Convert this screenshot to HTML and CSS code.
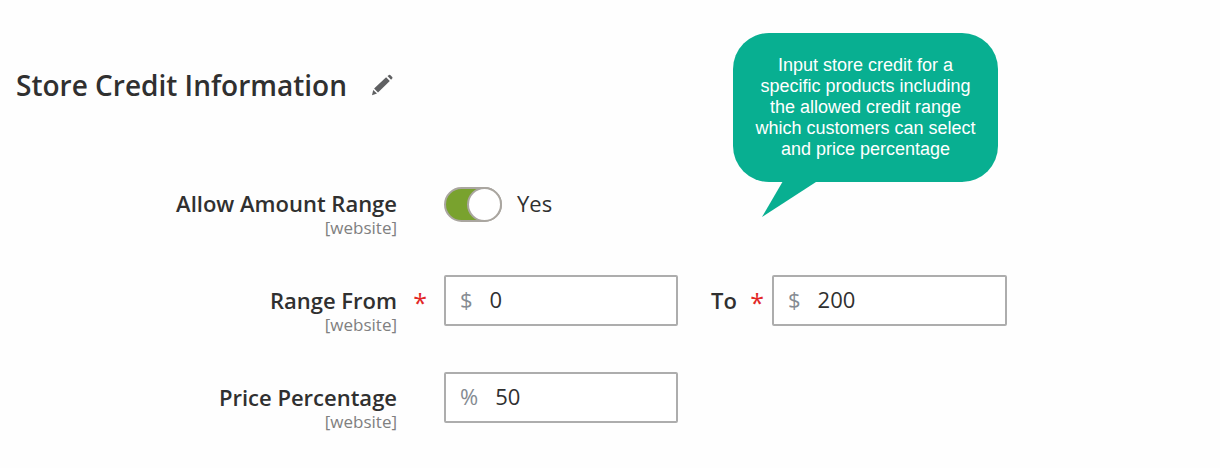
FILE: index.html
```html
<!DOCTYPE html>
<html lang="en">
<head>
<meta charset="utf-8">
<title>Store Credit Information</title>
<link rel="stylesheet" href="styles.css">
</head>
<body>
<main class="page">
  <header class="section-head">
    <h1 class="section-title">Store Credit Information</h1>
    <button class="edit" type="button" aria-label="Edit section">
      <svg class="edit-icon" viewBox="0 0 22 22" aria-hidden="true">
        <path d="M16.500 2.100 18 .9q.7-.4 1.200.1l2 2q.5.500.2 1.200l-1.300 1.500zM15.100 3.200l3.700 3.800L7 18.400l-3.900-3.800zM2.200 15.900l3.800 3.700-5 1.700z"/>
      </svg>
    </button>
  </header>

  <form class="fields">
    <div class="row">
      <label class="label" for="allow-range">Allow Amount Range<small class="scope">[website]</small></label>
      <div class="switch-cell">
        <input class="switch" id="allow-range" type="checkbox" checked>
        <span class="switch-text">Yes</span>
      </div>
    </div>
    <div class="row">
      <label class="label required" for="range-from">Range From<small class="scope">[website]</small></label>
      <div class="box">
        <span class="unit">$</span>
        <input class="value" id="range-from" type="text" value="0">
      </div>
      <label class="label-to required" for="range-to">To</label>
      <div class="box">
        <span class="unit">$</span>
        <input class="value" id="range-to" type="text" value="200">
      </div>
    </div>
    <div class="row">
      <label class="label" for="percentage">Price Percentage<small class="scope">[website]</small></label>
      <div class="box">
        <span class="unit">%</span>
        <input class="value" id="percentage" type="text" value="50">
      </div>
    </div>
  </form>

  <aside class="callout">
    <p class="callout-text">Input store credit for a<br>specific products including<br>the allowed credit range<br>which customers can select<br>and price percentage</p>
    <svg class="callout-tail" viewBox="0 0 54 36" aria-hidden="true"><path d="M21 0H54V1L0 36z"/></svg>
  </aside>
</main>
</body>
</html>
```
FILE: styles.css
```css
*,
*::before,
*::after {
  box-sizing: border-box;
}

body {
  margin: 0;
  background: #fefefe;
  color: #303030;
  font-family: "Open Sans", "Noto Sans", sans-serif;
}

.page {
  position: relative;
  padding: 64px 16px 40px;
}

.section-head {
  display: flex;
  align-items: center;
  gap: 24px;
  margin-bottom: 72px;
}

.section-title {
  margin: 0;
  font-size: 28px;
  font-weight: 600;
  line-height: 42px;
}

.edit {
  display: flex;
  padding: 0;
  border: 0;
  background: none;
}

.edit-icon {
  width: 22px;
  height: 22px;
  fill: #5f6062;
}

.fields {
  display: grid;
  gap: 36px;
}

.row {
  display: grid;
  grid-template-columns:
    minmax(0, 428fr) minmax(0, 234fr) minmax(0, 94fr)
    minmax(0, 235fr) minmax(0, 197fr);
  align-items: start;
}

.label,
.label-to {
  position: relative;
  padding-top: 11px;
  font-size: 22px;
  font-weight: 600;
  line-height: 28px;
}

.label {
  padding-right: 47px;
  text-align: right;
}

.label-to {
  padding-left: 33px;
}

.scope {
  display: block;
  color: #808080;
  font-size: 17px;
  font-weight: 400;
  line-height: 22px;
}

.required::after {
  content: "*";
  position: absolute;
  top: 13px;
  right: 17px;
  color: #e22626;
  font-size: 25px;
  font-weight: 400;
}

.label-to.required::after {
  right: 8px;
}

.switch-cell {
  display: flex;
  align-items: center;
  gap: 15px;
  height: 53px;
}

.switch {
  appearance: none;
  display: flex;
  flex: none;
  justify-content: flex-end;
  width: 58px;
  height: 35px;
  margin: 0;
  border: 2px solid #aaa6a0;
  border-radius: 18px;
  background: #79a22e;
}

.switch::before {
  content: "";
  width: 35px;
  height: 35px;
  margin: -2px;
  border: 2px solid #aaa6a0;
  border-radius: 50%;
  background: #fff;
}

.switch:not(:checked) {
  justify-content: flex-start;
  background: #fff;
}

.switch-text {
  padding-bottom: 3px;
  font-size: 22px;
  line-height: 28px;
}

.box {
  display: flex;
  align-items: center;
  gap: 17px;
  height: 51px;
  padding: 0 14px 3px;
  border: 2px solid #adadad;
  border-radius: 2px;
  background: #fff;
  font-size: 22px;
}

.unit {
  color: #858b92;
}

.value {
  flex: 1;
  min-width: 0;
  padding: 0;
  border: 0;
  outline: 0;
  background: none;
  color: #303030;
  font: inherit;
}

.callout {
  position: absolute;
  top: 33px;
  left: 733px;
  width: 265px;
  padding: 22px 16px;
  border-radius: 36px;
  background: #08af91;
  color: #fff;
  font-family: "Liberation Sans", Arial, sans-serif;
}

.callout-text {
  margin: 0;
  font-size: 18px;
  line-height: 21px;
  text-align: center;
}

.callout-tail {
  position: absolute;
  top: 100%;
  left: 29px;
  width: 54px;
  height: 36px;
  margin-top: -1px;
  fill: #08af91;
}
```
